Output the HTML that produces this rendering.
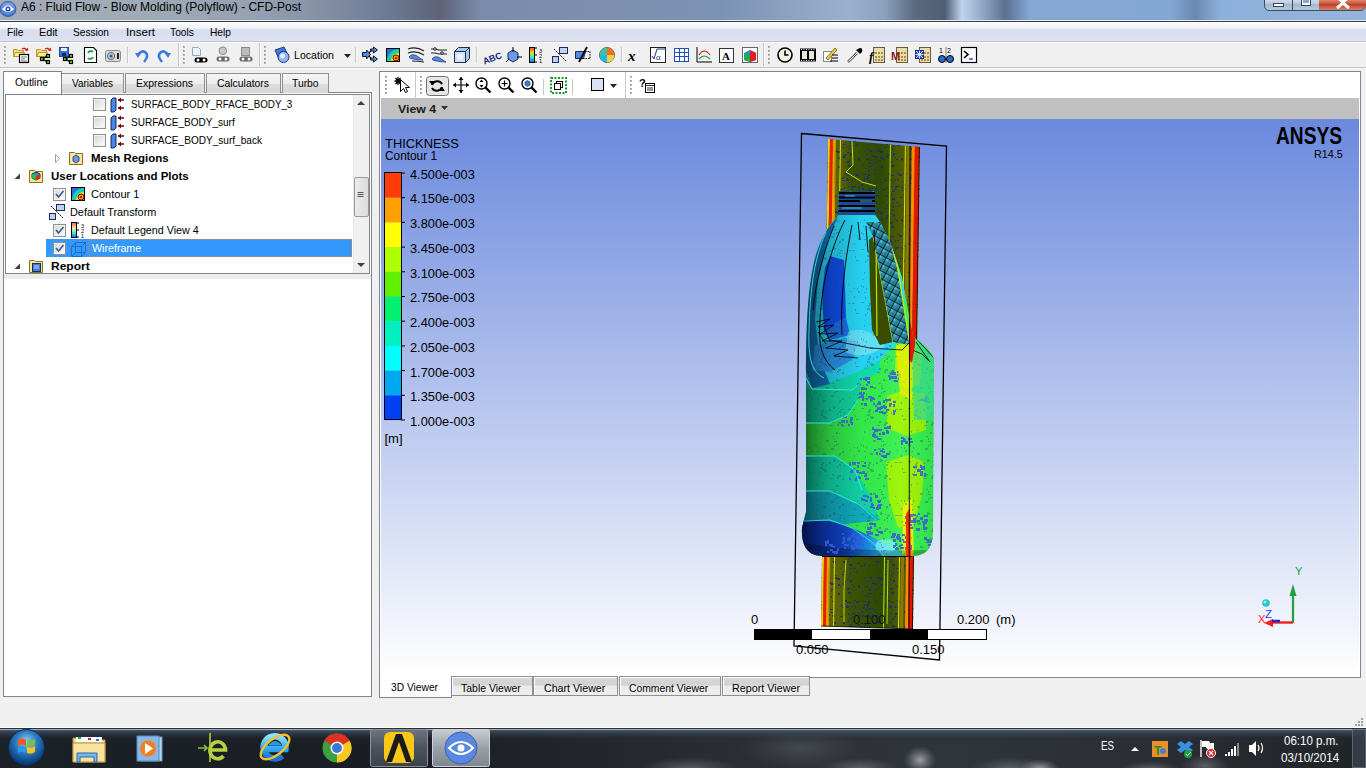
<!DOCTYPE html><html><head><meta charset='utf-8'><style>

*{margin:0;padding:0;box-sizing:border-box}
html,body{width:1366px;height:768px;overflow:hidden;background:#f0f0f0;font-family:"Liberation Sans",sans-serif;font-size:12px;color:#000}
.a{position:absolute}
.t{position:absolute;white-space:nowrap;transform-origin:0 0;font-family:"Liberation Sans",sans-serif}
svg{position:absolute;overflow:visible}
.tab{position:absolute;height:20px;border:1px solid #8e8f8f;border-bottom:none;background:linear-gradient(#f6f6f6 0%,#ededed 50%,#dedede 51%,#d6d6d6 100%)}
.btab{position:absolute;top:676px;height:20px;border:1px solid #8e8f8f;box-shadow:inset 1px 1px 0 #fff;background:linear-gradient(#d8d8d8 0%,#d2d2d2 45%,#ebebeb 50%,#eeeeee 100%)}

</style></head><body>
<div class='a' style='left:0;top:0;width:1366px;height:20px;background:linear-gradient(90deg,#a3acb8 0.00%,#a0a9b6 10.98%,#96a1b2 18.30%,#8a96aa 21.96%,#7f8aa0 24.89%,#6e7e98 27.82%,#5e6278 32.21%,#7a8caa 35.14%,#7d90ad 43.92%,#7a92b4 52.71%,#9ab0cc 62.23%,#8aa0bc 64.79%,#5a6a80 66.98%,#4e5e74 69.18%,#c0d4f0 70.42%,#8aa2c0 72.11%,#5a7090 73.57%,#86a8d4 75.40%,#84a8d6 85.65%,#6a88b0 87.48%,#8cb0dc 89.31%,#94b4dc 100.00%)'></div>
<div class='a' style='left:0;top:20px;width:1366px;height:1px;background:rgba(220,230,240,0.45)'></div>
<div class='a' style='left:0;top:21px;width:1366px;height:1px;background:#363e48'></div>
<div class='a' style='left:1264px;top:-3px;width:102px;height:14px;border:1px solid #3f4a5a;border-radius:0 0 5px 5px;background:linear-gradient(#dfe7f1,#b5c6dc 50%,#a2b7d3 51%,#b4c8e2)'></div>
<div class='a' style='left:1292px;top:0;width:1px;height:10px;background:#3f4a5a'></div>
<div class='a' style='left:1319px;top:0;width:1px;height:10px;background:#3f4a5a'></div>
<div class='a' style='left:1319px;top:-2px;width:47px;height:12px;border-radius:0 0 5px 0;background:linear-gradient(#e8a191,#c9513a 50%,#b83c23 51%,#d8826a)'></div>
<div class='a' style='left:1273px;top:3px;width:11px;height:4px;background:#fff;border:1px solid #39465a'></div>
<div class='a' style='left:1301px;top:-1px;width:10px;height:7px;background:#fff;border:1px solid #39465a'></div>
<div class='a' style='left:1303px;top:0px;width:6px;height:3px;background:#8fa7c6'></div>
<svg style='left:1335px;top:-3px' width='16' height='12'><path d='M2,0 L8,5 L14,0 M2,11 L8,6 L14,11' stroke='#fff' stroke-width='3' fill='none'/></svg>
<svg style='left:0;top:1px' width='17' height='17'><defs><radialGradient id='eyeg' cx='0.5' cy='0.4' r='0.6'><stop offset='0' stop-color='#b8d0f8'/><stop offset='1' stop-color='#3a68c8'/></radialGradient></defs><ellipse cx='8' cy='8' rx='8' ry='7.5' fill='url(#eyeg)' stroke='#2a50a0' stroke-width='0.8'/><path d='M2,8 q6,-6 12,0 q-6,6 -12,0z' fill='#fff'/><circle cx='8' cy='8' r='2.6' fill='#2a58b8'/><circle cx='8' cy='8' r='1.1' fill='#fff'/></svg>
<div class='a' style='left:0;top:22px;width:1366px;height:19px;background:linear-gradient(#fdfdfe 0%,#f3f5fa 30%,#e6eaf5 36%,#d8deef 42%,#dae0f0 85%,#dfe4f3 100%)'></div>
<div class='a' style='left:0;top:41px;width:1366px;height:1px;background:#bcc3d0'></div>
<div class='a' style='left:0;top:42px;width:1366px;height:1px;background:#fdfdfd'></div>
<div class='a' style='left:0;top:43px;width:1366px;height:24px;background:#f0f0f0'></div>
<div class='a' style='left:0;top:67px;width:1366px;height:1px;background:#c4c4c4'></div>
<div class='a' style='left:0;top:68px;width:1366px;height:1px;background:#fafafa'></div>
<div class='a' style='left:3px;top:92px;width:369px;height:605px;border:1px solid #80848c;background:#fff'></div>
<div class='tab' style='left:61px;top:73px;width:63px;height:20px'></div>
<div class='tab' style='left:125px;top:73px;width:80px;height:20px'></div>
<div class='tab' style='left:206px;top:73px;width:75px;height:20px'></div>
<div class='tab' style='left:282px;top:73px;width:47px;height:20px'></div>
<div class='a' style='left:3px;top:71px;width:59px;height:23px;border:1px solid #80848c;border-bottom:none;background:#fff'></div>
<div class='a' style='left:5px;top:94px;width:365px;height:180px;border:1px solid #80848c;background:#fff'></div>
<div class='a' style='left:4px;top:274px;width:367px;height:5px;background:#ececec'></div>
<div class='a' style='left:353px;top:95px;width:16px;height:178px;background:#f0f0f0;border-left:1px solid #e8e8e8'></div>
<div class='a' style='left:354px;top:177px;width:15px;height:40px;border:1px solid #9a9a9a;border-radius:2px;background:linear-gradient(90deg,#eaeaea,#dcdcdc)'></div>
<svg style='left:356px;top:190px' width='10' height='10'><path d='M1.5,2.5h6M1.5,4.5h6M1.5,6.5h6' stroke='#555' stroke-width='1'/></svg>
<svg style='left:356px;top:99px' width='10' height='8'><path d='M1,6 L5,2 L9,6Z' fill='#404040'/></svg>
<svg style='left:356px;top:261px' width='10' height='8'><path d='M1,2 L5,6 L9,2Z' fill='#404040'/></svg>
<div class='a' style='left:46px;top:239px;width:306px;height:18px;background:#3399ff'></div>
<div class='a' style='left:89px;top:239px;width:263px;height:18px;border:1px dotted #e08040'></div>
<div class='a' style='left:379px;top:71px;width:982px;height:606px;border:1px solid #80848c;border-bottom:none;background:#fff'></div>
<div class='a' style='left:381px;top:98px;width:978px;height:21px;background:#c0c0c0'></div>
<div class='a' style='left:381px;top:119px;width:978px;height:558px;background:linear-gradient(#6b89dd 0%,#ffffff 100%)'></div>
<div class='a' style='left:1359px;top:72px;width:1px;height:605px;background:#fff'></div>
<div class='btab' style='left:451px;width:82px'></div>
<div class='btab' style='left:533px;width:85px'></div>
<div class='btab' style='left:619px;width:102px'></div>
<div class='btab' style='left:722px;width:88px'></div>
<div class='a' style='left:809px;top:677px;width:552px;height:1px;background:#80848c'></div>
<div class='a' style='left:1360px;top:672px;width:1px;height:6px;background:#80848c'></div>
<svg style='left:1350px;top:717px' width='14' height='10'><g fill='#9aa0a8'><rect x='11' y='1' width='2' height='2'/><rect x='8' y='4' width='2' height='2'/><rect x='11' y='4' width='2' height='2'/><rect x='5' y='7' width='2' height='2'/><rect x='8' y='7' width='2' height='2'/><rect x='11' y='7' width='2' height='2'/></g></svg>
<div class='a' style='left:379px;top:676px;width:73px;height:22px;border:1px solid #80848c;border-top:none;background:#fff'></div>
<div class='a' style='left:0;top:727px;width:1366px;height:1px;background:#fdfdfd'></div>
<div class='a' style='left:0;top:728px;width:1366px;height:40px;background:linear-gradient(90deg,#1c2027 0%,#1a1e24 30%,#24282e 45%,#2e3238 60%,#30353b 70%,#2a2e34 85%,#202428 100%)'></div>
<svg style='left:0;top:728px' width='1366' height='40'><defs><radialGradient id='tb1'><stop offset='0' stop-color='#a8acb0' stop-opacity='0.9'/><stop offset='1' stop-color='#808488' stop-opacity='0'/></radialGradient><radialGradient id='tb2'><stop offset='0' stop-color='#70767c' stop-opacity='0.7'/><stop offset='1' stop-color='#60666c' stop-opacity='0'/></radialGradient></defs><ellipse cx='920' cy='32' rx='16' ry='14' fill='url(#tb1)'/><ellipse cx='690' cy='41' rx='50' ry='12' fill='url(#tb2)'/><ellipse cx='860' cy='40' rx='40' ry='10' fill='url(#tb2)'/><ellipse cx='1010' cy='41' rx='40' ry='12' fill='url(#tb2)'/><ellipse cx='1040' cy='41' rx='20' ry='10' fill='url(#tb1)'/><ellipse cx='1150' cy='41' rx='30' ry='8' fill='url(#tb2)'/><ellipse cx='1205' cy='38' rx='24' ry='12' fill='url(#tb2)'/><ellipse cx='800' cy='20' rx='60' ry='20' fill='url(#tb2)' opacity='0.5'/></svg>
<div class='a' style='left:0;top:728px;width:1366px;height:40px;background:linear-gradient(#28303a 0px,#28303a 1px,#a0aeb8 1px,#a0aeb8 2px,rgba(74,90,112,0.9) 2px,rgba(60,74,92,0.6) 5px,rgba(40,48,60,0.2) 10px,rgba(0,0,0,0) 16px)'></div>
<svg style='left:0;top:0' width='1366' height='768' viewBox='0 0 1366 768'><defs><clipPath id='colclip'><path d='M828,139 L920,147 L913,629 L821,626z'/></clipPath><clipPath id='bodyclip'><path d='M839,191 L875,191 L875,215 C884,226 894,250 902,278 L909,315 L913,336 C922,344 932,350 934,360 L933,532 C933,548 926,556 912,556 L822,556 C808,556 801,546 802,528 L806,512 L806,380 C806,320 808,290 814,262 C818,245 826,228 838,216 Z'/></clipPath><linearGradient id='colg' x1='821' x2='920' gradientUnits='userSpaceOnUse'><stop offset='0' stop-color='#6a6a00'/><stop offset='0.2' stop-color='#5a6000'/><stop offset='0.3' stop-color='#3c5200'/><stop offset='0.6' stop-color='#2e4a00'/><stop offset='0.8' stop-color='#4c5a00'/><stop offset='1' stop-color='#6e6a00'/></linearGradient><linearGradient id='shade' x1='802' x2='934' gradientUnits='userSpaceOnUse'><stop offset='0' stop-color='#000' stop-opacity='0.6'/><stop offset='0.08' stop-color='#000' stop-opacity='0.42'/><stop offset='0.22' stop-color='#000' stop-opacity='0.2'/><stop offset='0.45' stop-color='#000' stop-opacity='0.04'/><stop offset='0.75' stop-color='#fff' stop-opacity='0.06'/><stop offset='1' stop-color='#000' stop-opacity='0.08'/></linearGradient><pattern id='speck' width='47' height='53' patternUnits='userSpaceOnUse'><path d='M15,37h3v1h-3zM23,38h2v1h-2zM38,0h2v2h-2zM35,14h1v2h-1zM34,35h2v2h-2zM40,9h1v1h-1zM33,24h1v1h-1zM10,48h3v1h-3zM19,49h1v2h-1zM30,38h2v2h-2zM25,46h3v2h-3zM8,23h1v1h-1zM8,31h1v2h-1zM43,27h2v2h-2zM32,24h3v2h-3zM34,37h2v1h-2zM21,43h1v2h-1zM38,42h1v2h-1zM34,36h3v1h-3zM45,41h1v2h-1zM18,7h1v2h-1zM40,30h1v2h-1zM4,26h1v1h-1zM18,27h2v1h-2zM2,38h3v1h-3zM24,45h3v2h-3zM35,17h3v1h-3zM2,19h1v1h-1zM6,38h3v1h-3zM12,26h2v2h-2zM9,44h1v2h-1zM20,23h1v2h-1zM24,29h3v2h-3zM41,38h3v1h-3zM39,51h3v2h-3zM27,40h1v2h-1zM27,16h3v2h-3zM35,21h1v2h-1zM37,20h1v2h-1zM39,37h1v1h-1zM40,40h2v2h-2zM22,43h2v2h-2zM31,1h3v1h-3zM43,1h2v2h-2zM40,29h2v2h-2zM11,23h1v2h-1zM23,38h2v2h-2zM24,6h1v1h-1zM19,32h1v2h-1zM15,20h1v2h-1zM41,44h1v1h-1zM38,20h2v1h-2zM28,51h1v1h-1zM21,47h1v2h-1zM17,14h1v1h-1zM33,12h2v1h-2zM17,21h1v2h-1zM37,8h2v2h-2zM33,50h2v2h-2zM22,40h2v2h-2z' fill='#24348a'/></pattern><pattern id='speck2' width='43' height='61' patternUnits='userSpaceOnUse'><path d='M20,60h1v2h-1zM41,3h1v1h-1zM23,37h1v1h-1zM2,5h2v2h-2zM4,15h1v2h-1zM3,52h3v1h-3zM14,40h3v1h-3zM36,37h2v1h-2zM14,2h3v1h-3zM18,26h1v1h-1zM36,19h3v1h-3zM6,37h3v1h-3zM23,6h3v1h-3zM36,3h3v1h-3zM31,43h3v2h-3zM20,29h3v2h-3zM23,19h1v1h-1zM15,5h3v2h-3zM33,31h2v2h-2zM18,38h1v1h-1zM32,26h1v2h-1zM9,59h2v2h-2zM2,42h1v2h-1zM21,44h2v2h-2zM37,51h2v1h-2zM5,60h2v2h-2zM42,4h1v2h-1zM41,36h2v2h-2zM24,56h2v1h-2zM29,22h1v1h-1zM31,3h1v2h-1zM8,47h1v2h-1zM25,58h2v1h-2zM10,28h2v2h-2zM8,52h2v2h-2zM26,22h2v1h-2zM9,5h1v1h-1zM14,42h1v1h-1zM31,53h3v1h-3zM16,18h1v1h-1zM26,34h2v2h-2zM8,44h3v1h-3zM29,57h3v2h-3zM25,25h2v1h-2zM30,40h2v1h-2zM12,4h1v2h-1zM10,7h2v1h-2zM6,0h3v1h-3zM34,6h2v1h-2zM4,55h1v2h-1zM9,40h2v2h-2zM38,23h2v1h-2zM7,54h2v2h-2zM30,30h2v1h-2zM9,6h2v2h-2zM30,53h1v1h-1zM13,60h3v2h-3zM9,44h3v1h-3zM33,19h1v2h-1zM33,23h1v2h-1zM14,34h3v2h-3zM40,14h3v1h-3zM15,52h2v1h-2zM12,33h2v2h-2zM1,1h2v2h-2zM16,12h3v2h-3zM28,51h2v2h-2zM5,14h1v1h-1zM30,12h2v1h-2zM30,39h3v1h-3zM30,58h2v1h-2zM42,7h2v1h-2zM30,56h1v2h-1zM40,21h1v2h-1zM29,25h1v1h-1zM10,8h1v1h-1zM37,57h2v1h-2zM39,52h3v2h-3zM42,59h2v1h-2zM35,35h1v1h-1zM0,51h1v1h-1zM27,55h1v1h-1zM1,16h1v2h-1zM32,15h3v2h-3zM16,34h2v1h-2zM3,58h2v2h-2zM42,37h3v2h-3zM32,8h3v1h-3zM33,32h1v2h-1zM11,38h1v1h-1zM11,9h2v1h-2zM35,3h2v2h-2zM6,56h3v1h-3zM15,12h2v1h-2zM6,32h2v1h-2zM4,28h2v1h-2zM17,28h3v2h-3zM32,60h1v2h-1zM35,57h1v2h-1zM8,26h1v2h-1zM28,20h1v1h-1zM27,4h1v2h-1zM7,57h1v2h-1zM9,16h1v2h-1zM14,47h1v2h-1zM31,10h1v1h-1zM27,32h2v2h-2zM26,12h2v2h-2zM5,46h2v1h-2zM21,35h2v2h-2z' fill='#1c2c70'/></pattern><pattern id='checker' width='7' height='7' patternUnits='userSpaceOnUse' patternTransform='rotate(28)'><rect width='7' height='7' fill='#3a80c8'/><rect width='3.5' height='3.5' fill='#40c8b8'/><rect x='3.5' y='3.5' width='3.5' height='3.5' fill='#20886a'/><path d='M0,0.5h7M0.5,0v7' stroke='#000' stroke-width='0.7'/></pattern></defs><path d='M801.5,133.5 L946.5,146 L939.5,660 L794,646 Z' fill='none' stroke='#000' stroke-width='1.3'/><g clip-path='url(#colclip)'><rect x='815' y='135' width='110' height='500' fill='url(#colg)'/><rect x='815' y='135' width='110' height='500' fill='url(#speck2)' opacity='0.9'/><g transform='translate(0,139) skewX(-0.82) translate(0,-139)'><rect x='828' y='130' width='2' height='510' fill='#f0d000'/><rect x='830' y='130' width='3' height='510' fill='#e82000'/><rect x='833' y='130' width='2' height='510' fill='#ff9a00'/><rect x='835' y='130' width='1' height='510' fill='#c0a000'/><rect x='840' y='130' width='1' height='510' fill='#d8e800'/><rect x='890' y='130' width='1' height='510' fill='#b8e800'/><rect x='905' y='130' width='1' height='510' fill='#e0e800'/><rect x='907' y='130' width='3' height='510' fill='#8a7a00'/><rect x='912' y='130' width='3' height='510' fill='#ff8a00'/><rect x='915' y='130' width='4' height='510' fill='#e01800'/><rect x='919' y='130' width='1' height='510' fill='#400000'/></g><path d='M852,141 L853,165 L846,172 L862,182 L876,186' stroke='#c8e000' stroke-width='1' fill='none'/></g><g clip-path='url(#bodyclip)'><rect x='795' y='185' width='150' height='380' fill='#34f04c'/><path d='M795,375 L812,389 L852,390 L862,380 L880,372 L880,360 L795,360z' fill='#10e0b0'/><path d='M795,389 L812,389 L852,390 L862,380 L858,400 L848,415 L830,423 L795,423z' fill='#10d8a0'/><path d='M795,456 L835,456 L855,470 L870,495 L880,520 L795,530z' fill='#10d8a8'/><path d='M795,491 L830,491 L860,505 L880,520 L795,530z' fill='#10b0c0'/><path d='M790,185 H900 L905,300 L895,345 L880,360 C860,372 835,382 812,388 L790,385z' fill='#28d8f8'/><path d='M838,216 C826,228 818,245 814,262 C808,290 806,320 806,370 L812,388 L830,384 L820,360 L815,320 L818,280 L828,240z' fill='#1478c0'/><path d='M830,256 L844,260 L846,318 L836,323 L824,332 L822,292 L825,268z' fill='#1050f0'/><path d='M846,318 L836,323 L824,332 L830,340 L850,335z' fill='#1a70e8'/><path d='M815,345 L845,338 L858,342 L852,360 L830,372 L812,370z' fill='#2a9af0'/><path d='M848,332 C860,326 875,332 885,346 C872,356 858,358 845,352z' fill='#90f0ff' opacity='0.55'/><path d='M887,396 L905,390 L925,394 L926,430 L906,436 L887,428z' fill='#98f400'/><path d='M896,345 L912,340 L922,352 L920,385 L905,390 L895,372z' fill='#a8f400'/><path d='M886,462 L908,455 L924,462 L922,495 L914,524 L898,528 L889,500z' fill='#98f400'/><path d='M903,505 L912,498 L914,556 L902,556z' fill='#e8f000'/><linearGradient id='bband' x1='802' x2='910' gradientUnits='userSpaceOnUse'><stop offset='0' stop-color='#0a30b0'/><stop offset='0.4' stop-color='#1048d0'/><stop offset='0.62' stop-color='#1a90e8'/><stop offset='0.8' stop-color='#40d8f0'/><stop offset='1' stop-color='#30e8c0'/></linearGradient><path d='M790,522 C810,518 835,520 852,528 C872,536 890,545 906,556 H790z' fill='url(#bband)'/><ellipse cx='886' cy='546' rx='11' ry='7' fill='#80f8f8' opacity='0.7'/><rect x='795' y='185' width='150' height='380' fill='url(#shade)'/><path d='M790,540 C820,548 870,552 935,550 V560 H790z' fill='#000' opacity='0.25'/><rect x='795' y='185' width='150' height='380' fill='url(#speck)' opacity='0.3'/><path d='M883,406h4v2h-4zM884,406h2v3h-2zM884,407h2v2h-2zM883,400h2v3h-2zM893,412h2v3h-2zM875,405h2v2h-2zM878,401h2v2h-2zM881,406h2v3h-2zM879,402h2v3h-2zM877,407h4v3h-4zM893,410h3v2h-3zM889,405h2v2h-2zM885,399h2v2h-2zM882,412h2v2h-2zM879,411h4v2h-4zM893,404h2v3h-2zM886,409h3v2h-3zM877,403h4v2h-4zM877,408h2v2h-2zM883,405h2v2h-2zM884,412h2v2h-2zM887,399h4v2h-4zM875,410h3v2h-3zM879,403h2v2h-2zM893,401h3v2h-3zM889,403h3v2h-3zM859,393h2v2h-2zM868,396h4v2h-4zM873,398h2v2h-2zM861,394h2v3h-2zM862,394h2v3h-2zM873,403h2v2h-2zM859,393h3v2h-3zM870,397h4v3h-4zM866,398h2v2h-2zM862,399h2v2h-2zM861,403h2v2h-2zM862,397h2v2h-2zM861,396h2v2h-2zM864,403h3v3h-3zM870,398h2v3h-2zM859,392h3v3h-3zM863,392h2v2h-2zM859,396h2v2h-2zM873,433h2v3h-2zM884,427h3v2h-3zM873,432h2v2h-2zM887,426h4v3h-4zM872,434h4v3h-4zM872,427h2v3h-2zM874,429h4v3h-4zM877,438h4v2h-4zM879,433h2v2h-2zM882,432h2v3h-2zM874,436h4v2h-4zM886,430h2v3h-2zM882,432h3v3h-3zM887,432h2v2h-2zM878,429h4v2h-4zM886,431h3v2h-3zM851,470h2v3h-2zM849,478h2v2h-2zM857,466h2v2h-2zM856,470h3v3h-3zM865,478h4v2h-4zM849,463h2v3h-2zM862,471h3v3h-3zM864,462h2v2h-2zM857,462h3v2h-3zM864,475h2v2h-2zM850,471h3v2h-3zM862,465h4v2h-4zM852,462h4v3h-4zM862,465h3v2h-3zM859,477h2v2h-2zM865,473h2v2h-2zM856,476h4v2h-4zM857,465h2v2h-2zM859,472h3v2h-3zM855,478h2v3h-2zM865,475h2v2h-2zM853,468h2v2h-2zM871,504h3v2h-3zM877,505h3v3h-3zM862,499h4v2h-4zM870,493h2v2h-2zM875,495h3v3h-3zM875,495h2v3h-2zM877,500h4v2h-4zM871,503h2v2h-2zM870,497h2v3h-2zM870,506h3v2h-3zM873,507h2v2h-2zM876,507h3v3h-3zM870,499h2v3h-2zM861,498h2v3h-2zM878,501h2v2h-2zM863,495h4v2h-4zM878,504h4v2h-4zM865,500h3v2h-3zM877,506h4v3h-4zM867,496h2v2h-2zM901,443h2v2h-2zM901,437h3v2h-3zM908,438h4v2h-4zM905,441h3v3h-3zM901,440h4v2h-4zM904,439h2v3h-2zM901,441h2v3h-2zM902,440h2v2h-2zM910,441h3v2h-3zM903,438h2v2h-2zM921,467h2v2h-2zM923,466h2v2h-2zM917,469h4v3h-4zM921,466h4v3h-4zM920,465h2v3h-2zM920,474h3v2h-3zM920,471h3v3h-3zM924,473h2v2h-2zM913,466h4v2h-4zM914,466h2v2h-2zM924,474h2v3h-2zM913,474h4v2h-4zM921,468h4v2h-4zM918,469h3v2h-3zM918,513h2v2h-2zM913,518h3v2h-3zM923,522h2v3h-2zM921,517h2v3h-2zM923,527h4v3h-4zM917,520h3v2h-3zM911,514h2v2h-2zM908,517h3v2h-3zM920,518h2v2h-2zM921,517h2v2h-2zM923,528h2v2h-2zM910,527h3v2h-3zM909,518h2v3h-2zM907,520h4v3h-4zM909,514h4v3h-4zM905,522h2v2h-2zM914,520h2v3h-2zM913,514h3v2h-3zM923,521h4v3h-4zM916,528h4v3h-4zM907,522h2v2h-2zM924,515h4v2h-4zM922,521h2v2h-2zM924,519h4v3h-4zM911,520h4v3h-4zM910,527h3v2h-3zM905,516h2v3h-2zM908,524h4v2h-4zM923,524h2v3h-2zM925,527h2v2h-2zM899,540h2v2h-2zM900,547h4v2h-4zM910,545h2v2h-2zM902,539h2v2h-2zM897,534h3v2h-3zM893,539h3v3h-3zM902,539h2v2h-2zM905,536h2v3h-2zM908,545h3v2h-3zM895,543h2v3h-2zM896,536h2v3h-2zM910,547h2v3h-2zM891,536h4v2h-4zM902,534h3v2h-3zM905,547h2v3h-2zM895,548h4v2h-4zM897,537h4v3h-4zM893,546h2v2h-2zM906,542h2v2h-2zM898,536h2v2h-2zM893,545h3v2h-3zM901,544h2v2h-2zM903,541h4v2h-4zM892,533h4v3h-4zM899,545h2v2h-2zM896,547h2v3h-2zM846,544h3v2h-3zM858,536h3v2h-3zM858,537h4v3h-4zM852,546h3v2h-3zM851,548h4v2h-4zM844,547h2v2h-2zM847,538h3v3h-3zM848,538h2v3h-2zM851,545h2v3h-2zM851,535h4v2h-4zM856,536h2v3h-2zM843,537h2v3h-2zM857,539h3v3h-3zM842,533h2v2h-2zM842,542h2v2h-2zM855,542h2v3h-2zM844,544h3v2h-3zM848,537h3v3h-3zM843,540h2v3h-2zM852,533h3v2h-3zM856,545h4v3h-4zM853,540h2v2h-2zM829,544h2v2h-2zM834,551h4v3h-4zM825,541h4v3h-4zM827,551h2v2h-2zM827,540h2v2h-2zM837,548h2v3h-2zM830,549h3v2h-3zM825,543h2v3h-2zM833,546h2v2h-2zM825,542h2v2h-2zM832,551h4v2h-4zM830,544h3v3h-3zM863,388h4v2h-4zM860,378h2v2h-2zM870,386h3v2h-3zM865,379h2v2h-2zM868,381h2v3h-2zM861,387h4v2h-4zM866,377h2v3h-2zM866,384h2v2h-2zM863,378h2v2h-2zM867,377h3v3h-3zM865,377h4v3h-4zM861,388h3v2h-3zM867,381h2v2h-2zM857,383h4v2h-4zM902,381h3v2h-3zM893,376h4v3h-4zM898,373h2v2h-2zM898,377h2v3h-2zM894,380h4v2h-4zM892,370h2v3h-2zM890,376h3v3h-3zM893,376h3v2h-3zM899,376h2v2h-2zM890,373h2v2h-2zM892,372h4v3h-4zM897,374h4v2h-4zM889,377h2v3h-2zM897,371h2v2h-2zM888,375h2v2h-2zM891,371h2v2h-2zM924,397h4v3h-4zM921,398h2v3h-2zM924,399h4v3h-4zM920,399h3v2h-3zM927,401h2v2h-2zM923,399h4v2h-4zM926,398h3v2h-3zM928,401h2v2h-2zM848,424h2v2h-2zM846,420h2v3h-2zM851,422h2v3h-2zM850,421h2v2h-2zM841,420h4v3h-4zM843,416h3v2h-3zM845,416h2v2h-2zM850,420h2v3h-2zM850,417h3v3h-3zM841,424h2v2h-2zM882,451h3v2h-3zM876,452h2v2h-2zM874,449h2v2h-2zM883,455h4v3h-4zM881,455h2v2h-2zM876,452h2v3h-2zM879,453h2v2h-2zM880,450h3v2h-3zM882,448h2v2h-2zM886,453h4v2h-4zM927,541h4v2h-4zM928,544h4v2h-4zM924,537h3v3h-3zM928,539h2v2h-2zM932,538h4v3h-4zM927,539h3v3h-3zM932,538h4v2h-4zM928,539h2v2h-2zM930,540h2v3h-2zM926,539h2v2h-2zM880,531h3v3h-3zM871,532h2v3h-2zM876,529h2v2h-2zM872,523h4v2h-4zM869,531h2v2h-2zM867,527h4v3h-4zM870,526h2v2h-2zM869,527h3v2h-3zM869,523h4v2h-4zM867,533h2v2h-2zM869,533h4v2h-4zM867,533h2v3h-2zM874,524h2v3h-2zM866,531h3v2h-3zM878,531h2v2h-2zM875,534h4v2h-4z' fill='#3a5ad8' opacity='0.85'/><path d='M869,240 L873,236 L893,342 L880,345 L872,330 L870,290z' fill='#3a4c00'/><path d='M876,242 L877,336' stroke='#b8e800' stroke-width='1.2' fill='none'/><path d='M873,236 L893,342' stroke='#d0f000' stroke-width='1' fill='none'/><path d='M866,222 L886,222 L898,270 L910,345 L893,342 L873,236z' fill='url(#checker)'/><path d='M886,222 L898,270 L910,345' stroke='#c0f000' stroke-width='1.4' fill='none'/><path d='M912,338 C920,342 928,348 934,360 L934,420 L914,420z' fill='#38d890' opacity='0.7'/><path d='M896,346 L910,344 L912,400 L900,395z' fill='#e0f000' opacity='0.85'/><path d='M914,336 L934,358 M916,342 L930,362 M912,350 l10,4 l8,8' stroke='#000' stroke-width='0.8' fill='none'/><path d='M909,146 L915,146 L915,345 L912,363 L909,360z' fill='#e81800'/><path d='M906,514 L910,508 L911,556 L906,556z' fill='#ff3000'/><rect x='838' y='191' width='38' height='24' fill='#1a4a90'/><path d='M838,193 h38 M838,197.5 h38 M838,201 h38 M838,206 h38 M838,211 h38' stroke='#000' stroke-width='1.8'/><path d='M845,196 h10 M860,201 h12 M842,208 h20' stroke='#30c0e0' stroke-width='1.2'/><path d='M850,191 l10,-3 l14,3' stroke='#a0f000' stroke-width='1' fill='none'/></g><g fill='none' stroke='#40f0f0' stroke-width='0.9' opacity='0.9'><path d='M806,378 L812,389 L852,390 L862,382'/><path d='M806,423 L830,423 L848,415 L858,400'/><path d='M806,456 L835,456 L855,470 L862,490'/><path d='M806,491 L830,491 L860,505 L876,520'/><path d='M804,521 L830,520 L852,528 L872,542 L884,556'/><path d='M826,232 C814,258 810,290 809,330 C808,360 812,372 824,378'/></g><g fill='none' stroke='#000' stroke-width='0.9'><path d='M845,220 C832,245 822,280 820,320 C818,345 822,360 835,370'/><path d='M852,225 C845,260 840,300 842,335'/><path d='M834,226 C824,250 816,280 813,310'/><path d='M816,322 l14,-3 l-12,8 l16,-2 l-14,9 l18,-1 l-16,8 l20,0 l-16,7 l22,2 l-14,6 l24,2 M818,332 l8,12 M824,326 l6,16 M830,340 l40,8 l32,2 l8,-8' stroke-width='0.8'/><path d='M858,222 L860,240 M866,226 L868,252 M874,230 L875,250'/><path d='M910,146 L909,628'/></g><path d='M821,626 L913,629' stroke='#000' stroke-width='0.8'/><path d='M822,556.5 H912' stroke='#000' stroke-width='1'/><path d='M846,560 q-3,30 -2,62 M888,560 l-1,64' stroke='#c8e800' stroke-width='0.9' fill='none'/><rect x='754.5' y='629.5' width='232' height='10' fill='#fff' stroke='#000'/><rect x='754' y='629' width='58' height='11' fill='#000'/><rect x='870' y='629' width='58' height='11' fill='#000'/><rect x='385' y='173.00' width='16' height='24.8' fill='#ff3c0a'/><rect x='385' y='197.70' width='16' height='24.8' fill='#ffa000'/><rect x='385' y='222.40' width='16' height='24.8' fill='#ffff00'/><rect x='385' y='247.10' width='16' height='24.8' fill='#b0ff00'/><rect x='385' y='271.80' width='16' height='24.8' fill='#60f000'/><rect x='385' y='296.50' width='16' height='24.8' fill='#00f070'/><rect x='385' y='321.20' width='16' height='24.8' fill='#00f0c0'/><rect x='385' y='345.90' width='16' height='24.8' fill='#00ffff'/><rect x='385' y='370.60' width='16' height='24.8' fill='#00a8f0'/><rect x='385' y='395.30' width='16' height='24.8' fill='#0040f0'/><rect x='384.5' y='172.5' width='17' height='247' fill='none' stroke='#000'/><path d='M401,173.00 h4' stroke='#000' stroke-width='1'/><path d='M401,197.70 h4' stroke='#000' stroke-width='1'/><path d='M401,222.40 h4' stroke='#000' stroke-width='1'/><path d='M401,247.10 h4' stroke='#000' stroke-width='1'/><path d='M401,271.80 h4' stroke='#000' stroke-width='1'/><path d='M401,296.50 h4' stroke='#000' stroke-width='1'/><path d='M401,321.20 h4' stroke='#000' stroke-width='1'/><path d='M401,345.90 h4' stroke='#000' stroke-width='1'/><path d='M401,370.60 h4' stroke='#000' stroke-width='1'/><path d='M401,395.30 h4' stroke='#000' stroke-width='1'/><path d='M401,420.00 h4' stroke='#000' stroke-width='1'/></svg>
<svg style='left:0;top:0' width='1366' height='768' viewBox='0 0 1366 768'><rect x='4' y='46' width='2' height='2' fill='#b4b4b4'/><rect x='4' y='46' width='1' height='1' fill='#8c8c8c'/><rect x='4' y='50' width='2' height='2' fill='#b4b4b4'/><rect x='4' y='50' width='1' height='1' fill='#8c8c8c'/><rect x='4' y='54' width='2' height='2' fill='#b4b4b4'/><rect x='4' y='54' width='1' height='1' fill='#8c8c8c'/><rect x='4' y='58' width='2' height='2' fill='#b4b4b4'/><rect x='4' y='58' width='1' height='1' fill='#8c8c8c'/><rect x='4' y='62' width='2' height='2' fill='#b4b4b4'/><rect x='4' y='62' width='1' height='1' fill='#8c8c8c'/><g transform='translate(13,47)'><path d='M0.5,2.5 h4 l1,1 h5 v6 h-10z' fill='#f6dc7a' stroke='#b8942c'/><path d='M0.5,9.5 l2,-4 h9 l-2,4z' fill='#fbe9a0' stroke='#b8942c'/><path d='M9,2 q3,-2 5,2' stroke='#d02020' stroke-width='1.4' fill='none'/><path d='M12.5,3.5 l3,0 l-1,-3z' fill='#d02020'/><rect x='6.5' y='7.5' width='9' height='8' fill='#fff' stroke='#000' stroke-width='1.2'/><path d='M8,10h6M8,12h4M8,14h6' stroke='#777'/></g><g transform='translate(36,47)'><path d='M0.5,2.5 h4 l1,1 h5 v6 h-10z' fill='#f6dc7a' stroke='#b8942c'/><path d='M0.5,9.5 l2,-4 h9 l-2,4z' fill='#fbe9a0' stroke='#b8942c'/><path d='M9,2 q3,-2 5,2' stroke='#d02020' stroke-width='1.4' fill='none'/><path d='M12.5,3.5 l3,0 l-1,-3z' fill='#d02020'/><g fill='#7de80a' stroke='#000' stroke-width='1.2'><rect x='10.5' y='7.5' width='3' height='3'/><rect x='4.5' y='10.5' width='3' height='3'/><rect x='10.5' y='13.5' width='3' height='3'/></g><path d='M7,12 L11,9 M7,12 L11,15' stroke='#000' stroke-width='1.3'/></g><g transform='translate(59,47)'><rect x='0.5' y='0.5' width='9' height='9' fill='#3d6fd0' stroke='#234a9a'/><rect x='2' y='1' width='6' height='3' fill='#e8eefa'/><rect x='3' y='6' width='4' height='3' fill='#12285a'/><g fill='#7de80a' stroke='#000' stroke-width='1.2'><rect x='10.5' y='7.5' width='3' height='3'/><rect x='4.5' y='10.5' width='3' height='3'/><rect x='10.5' y='13.5' width='3' height='3'/></g><path d='M7,12 L11,9 M7,12 L11,15' stroke='#000' stroke-width='1.3'/></g><g transform='translate(84,47)'><path d='M0.5,0.5 h9 l3,3 v12 h-12z' fill='#fff' stroke='#000' stroke-width='1.1'/><path d='M4,6 a3,3 0 0 1 5,-1 M9,10 a3,3 0 0 1 -5,1' stroke='#1a9a3a' stroke-width='1.8' fill='none'/></g><g transform='translate(105,49)'><rect x='0.5' y='1.5' width='15' height='11' rx='2' fill='#d9d9d9' stroke='#8a8a8a'/><circle cx='6' cy='7' r='3.6' fill='#bfc8d0' stroke='#6a6a6a'/><circle cx='6' cy='7' r='1.6' fill='#2a60b0'/><rect x='12' y='4' width='2' height='6' fill='#222'/></g><rect x='127' y='47' width='1' height='16' fill='#c8c8c8'/><rect x='128' y='47' width='1' height='16' fill='#f8f8f8'/><g transform='translate(135,49)'><path d='M3,6 q4,-6 8,-2 q3,3 -2,9' stroke='#3c78d8' stroke-width='2.6' fill='none'/><path d='M0,4 l6,0 l-3,5z' fill='#3c78d8'/></g><g transform='translate(159,49)'><path d='M9,6 q-4,-6 -8,-2 q-3,3 2,9' stroke='#3c78d8' stroke-width='2.6' fill='none'/><path d='M12,4 l-6,0 l3,5z' fill='#3c78d8'/></g><rect x='178' y='43' width='1' height='23' fill='#c4c4c4'/><rect x='179' y='43' width='1' height='23' fill='#ffffff'/><rect x='183' y='46' width='2' height='2' fill='#b4b4b4'/><rect x='183' y='46' width='1' height='1' fill='#8c8c8c'/><rect x='183' y='50' width='2' height='2' fill='#b4b4b4'/><rect x='183' y='50' width='1' height='1' fill='#8c8c8c'/><rect x='183' y='54' width='2' height='2' fill='#b4b4b4'/><rect x='183' y='54' width='1' height='1' fill='#8c8c8c'/><rect x='183' y='58' width='2' height='2' fill='#b4b4b4'/><rect x='183' y='58' width='1' height='1' fill='#8c8c8c'/><rect x='183' y='62' width='2' height='2' fill='#b4b4b4'/><rect x='183' y='62' width='1' height='1' fill='#8c8c8c'/><g transform='translate(192,47)'><path d='M0.5,0.5 h6 l2,2 v6 h-8z' fill='#eef2fa' stroke='#9aa'/><g transform='translate(2,10)'><g><rect x='0.5' y='0.5' width='13' height='5' rx='2.5' fill='#000'/><circle cx='4' cy='3' r='1.5' fill='#fff'/><circle cx='10' cy='3' r='1.5' fill='#fff'/></g></g></g><g transform='translate(216,47)'><circle cx='6.8' cy='3.8' r='3.8' fill='#c8c8c8' stroke='#8a8a8a'/><g transform='translate(0,9)'><g><rect x='0.5' y='0.5' width='13' height='5' rx='2.5' fill='#666'/><circle cx='4' cy='3' r='1.5' fill='#fff'/><circle cx='10' cy='3' r='1.5' fill='#fff'/></g></g></g><g transform='translate(239,47)'><rect x='2.5' y='0.5' width='8' height='8' fill='#bdbdbd' stroke='#8a8a8a'/><g transform='translate(0,9)'><g><rect x='0.5' y='0.5' width='13' height='5' rx='2.5' fill='#666'/><circle cx='4' cy='3' r='1.5' fill='#fff'/><circle cx='10' cy='3' r='1.5' fill='#fff'/></g></g></g><rect x='259' y='43' width='1' height='23' fill='#c4c4c4'/><rect x='260' y='43' width='1' height='23' fill='#ffffff'/><rect x='264' y='46' width='2' height='2' fill='#b4b4b4'/><rect x='264' y='46' width='1' height='1' fill='#8c8c8c'/><rect x='264' y='50' width='2' height='2' fill='#b4b4b4'/><rect x='264' y='50' width='1' height='1' fill='#8c8c8c'/><rect x='264' y='54' width='2' height='2' fill='#b4b4b4'/><rect x='264' y='54' width='1' height='1' fill='#8c8c8c'/><rect x='264' y='58' width='2' height='2' fill='#b4b4b4'/><rect x='264' y='58' width='1' height='1' fill='#8c8c8c'/><rect x='264' y='62' width='2' height='2' fill='#b4b4b4'/><rect x='264' y='62' width='1' height='1' fill='#8c8c8c'/><g transform='translate(274,47)'><path d='M1,3 l9,-3 l4,8 l-9,4z' fill='#4a78d0' stroke='#1a3a8a'/><circle cx='9.5' cy='10' r='5.5' fill='#8fb4f0' stroke='#1a3a8a'/><circle cx='8.5' cy='9' r='2.5' fill='#e6eeff'/></g><path d='M344,54 h7 l-3.5,4z' fill='#222'/><rect x='355' y='47' width='1' height='16' fill='#c8c8c8'/><rect x='356' y='47' width='1' height='16' fill='#f8f8f8'/><g transform='translate(362,47)'><path d='M6,7.5 L9,3.5 M6,7.5 L9,11.5' stroke='#000' stroke-width='1.2' fill='none'/><path d='M0.5,5.5 h4 v-2.5 l4,4.5 l-4,4.5 v-2.5 h-4z' fill='#4a90e8' stroke='#000' stroke-width='0.9'/><path d='M8.5,2 h3 v-2 l4,3 l-4,3 v-2 h-3z' fill='#4a90e8' stroke='#000' stroke-width='0.9'/><path d='M8.5,11 h3 v-2 l4,3 l-4,3 v-2 h-3z' fill='#4a90e8' stroke='#000' stroke-width='0.9'/></g><g transform='translate(386,48)'><rect x='0.5' y='0.5' width='13' height='13' fill='#2b6fd6' stroke='#000'/><path d='M1,13 a12,12 0 0 1 12,-12 v12z' fill='#18d0a0'/><path d='M5,13 a8,8 0 0 1 8,-8 v8z' fill='#f0e020'/><circle cx='10' cy='10' r='3' fill='#f5a000' stroke='#8a0000'/><circle cx='10' cy='10' r='1' fill='#8a0000'/></g><g transform='translate(408,47)'><path d='M0,2 q8,-3 16,2 M0,6 q8,-3 16,2 M4,14 q6,0 12,1' stroke='#222' stroke-width='1.2' fill='none'/><path d='M1,10 q3,-4 8,-1 q4,3 6,4 q-6,0 -9,-1 q-4,0 -5,-2z' fill='#5a8ae0' stroke='#1a3a8a' stroke-width='0.8'/></g><g transform='translate(431,47)'><path d='M0,2 h4 l4,1 h8 M0,6 h4 l4,1 h8' stroke='#222' stroke-width='1.2' fill='none'/><circle cx='4' cy='2' r='1.3' fill='#fff' stroke='#222'/><circle cx='11' cy='6' r='1.3' fill='#fff' stroke='#222'/><path d='M1,12 q3,-4 8,-1 q4,3 6,4 q-6,0 -9,-1 q-4,0 -5,-2z' fill='#5a8ae0' stroke='#1a3a8a' stroke-width='0.8'/></g><g transform='translate(454,47)'><path d='M0.5,4.5 l4,-4 h11 v11 l-4,4 h-11z' fill='#a8c8e8' stroke='#1a3050'/><path d='M0.5,4.5 h11 v11 M11.5,4.5 l4,-4' stroke='#1a3050' fill='none'/><rect x='1' y='5' width='10' height='10' fill='#d0e2f4'/><circle cx='6' cy='10' r='3' fill='#f4f8fc' opacity='0.8'/></g><rect x='476' y='47' width='1' height='16' fill='#c8c8c8'/><rect x='477' y='47' width='1' height='16' fill='#f8f8f8'/><text x='482' y='62' font-family='Liberation Sans' font-weight='bold' font-size='9' fill='#1a2a80' transform='rotate(-20 490 57)'>ABC</text><g transform='translate(506,47)'><path d='M2,6 l5,-3 l5,3 v6 l-5,3 l-5,-3z' fill='#6a9ae8' stroke='#1a2a60'/><path d='M7,0 v5 M11,10 h5 M3,12 l-3,3' stroke='#000' stroke-width='1'/></g><g transform='translate(529,47)'><defs><linearGradient id='lg' x1='0' y1='0' x2='0' y2='1'><stop offset='0' stop-color='#f04020'/><stop offset='0.35' stop-color='#f0e020'/><stop offset='0.7' stop-color='#20e0e0'/><stop offset='1' stop-color='#2050e0'/></linearGradient></defs><rect x='0.5' y='0.5' width='5' height='15' fill='url(#lg)' stroke='#000'/><path d='M6,1h2M6,8h2M6,15h2' stroke='#000'/><text x='10' y='6' font-size='5.5' font-family='Liberation Sans'>3</text><text x='10' y='11' font-size='5.5' font-family='Liberation Sans'>2</text><text x='10' y='16' font-size='5.5' font-family='Liberation Sans'>1</text></g><g transform='translate(552,47)'><rect x='7.5' y='0.5' width='8' height='6' fill='#c0d0f0' stroke='#1a2a60'/><rect x='0.5' y='9.5' width='6' height='6' fill='#c0d0f0' stroke='#1a2a60'/><path d='M2,2 L14,14' stroke='#000' stroke-dasharray='2,1'/></g><g transform='translate(575,47)'><path d='M0.5,4.5 h10 l-2,7 h-8z' fill='#5a88e0' stroke='#1a2a60'/><path d='M10,4.5 h5 v7 h-7' stroke='#000' stroke-dasharray='1.5,1' fill='none'/><path d='M4,15 L12,0' stroke='#000' stroke-width='1.8'/></g><g transform='translate(599,47)'><circle cx='8' cy='8' r='7.5' fill='#e0e0e0' stroke='#555'/><path d='M8,8 L8,0.5 A7.5,7.5 0 0 1 15.5,8z' fill='#f07020'/><path d='M8,8 L15.5,8 A7.5,7.5 0 0 1 8,15.5z' fill='#f0d040'/><path d='M8,8 L8,15.5 A7.5,7.5 0 0 1 0.5,8z' fill='#20b8e0'/><path d='M8,8 L0.5,8 A7.5,7.5 0 0 1 8,0.5z' fill='#40c0a0'/></g><rect x='621' y='47' width='1' height='16' fill='#c8c8c8'/><rect x='622' y='47' width='1' height='16' fill='#f8f8f8'/><text x='628' y='61' font-family='Liberation Serif' font-style='italic' font-weight='bold' font-size='15' fill='#000'>x</text><g transform='translate(650,47)'><rect x='0.5' y='0.5' width='15' height='15' fill='#fff' stroke='#222'/><path d='M2,9 l2,3 l3,-10 h8' stroke='#1a3a8a' fill='none'/><text x='6' y='13' font-size='9' font-family='Liberation Serif' fill='#1a3a8a'>α</text></g><g transform='translate(674,48)'><rect x='0.5' y='0.5' width='14' height='13' fill='#fff' stroke='#2050c0'/><path d='M0.5,4.5h14M0.5,8.5h14M5.5,0.5v13M10.5,0.5v13' stroke='#2050c0'/></g><g transform='translate(696,47)'><path d='M1,0 v15 h15' stroke='#000' fill='none'/><path d='M3,8 q5,-8 11,0' stroke='#d02020' fill='none' stroke-width='1.2'/><path d='M3,12 q5,-6 11,0' stroke='#20a040' fill='none' stroke-width='1.2'/></g><g transform='translate(719,47)'><rect x='0.5' y='1.5' width='14' height='14' fill='#fff' stroke='#333'/><text x='3' y='13' font-size='11' font-family='Liberation Serif' font-weight='bold'>A</text></g><g transform='translate(742,47)'><rect x='0.5' y='0.5' width='15' height='15' fill='#fff' stroke='#666'/><path d='M2,6 l6,-3 l6,3 v7 l-6,2 l-6,-2z' fill='#2a8ad0'/><path d='M8,3 l6,3 v7 l-6,2z' fill='#e02020'/><path d='M2,6 l6,3 v6 l-6,-2z' fill='#20b040'/></g><rect x='763' y='43' width='1' height='23' fill='#c4c4c4'/><rect x='764' y='43' width='1' height='23' fill='#ffffff'/><rect x='768' y='46' width='2' height='2' fill='#b4b4b4'/><rect x='768' y='46' width='1' height='1' fill='#8c8c8c'/><rect x='768' y='50' width='2' height='2' fill='#b4b4b4'/><rect x='768' y='50' width='1' height='1' fill='#8c8c8c'/><rect x='768' y='54' width='2' height='2' fill='#b4b4b4'/><rect x='768' y='54' width='1' height='1' fill='#8c8c8c'/><rect x='768' y='58' width='2' height='2' fill='#b4b4b4'/><rect x='768' y='58' width='1' height='1' fill='#8c8c8c'/><rect x='768' y='62' width='2' height='2' fill='#b4b4b4'/><rect x='768' y='62' width='1' height='1' fill='#8c8c8c'/><g transform='translate(777,47)'><circle cx='8' cy='8' r='7' fill='#f8f4e0' stroke='#000' stroke-width='1.6'/><path d='M8,3.5 V8 H11.5' stroke='#000' stroke-width='1.6' fill='none'/></g><g transform='translate(800,48)'><rect x='0' y='0.5' width='16' height='13' fill='#000'/><rect x='2' y='3' width='5' height='8' fill='#e8e8d8'/><rect x='9' y='3' width='5' height='8' fill='#e8e8d8'/><path d='M1,1.5 h14 M1,12.5 h14' stroke='#fff' stroke-dasharray='1,1.5'/></g><g transform='translate(823,47)'><rect x='0.5' y='4.5' width='8' height='10' fill='#fff' stroke='#888'/><path d='M3,11 l9,-10 l2,2 l-9,10z' fill='#f0d020' stroke='#555' stroke-width='0.8'/><path d='M9,8h6M9,11h6M7,14h8' stroke='#000'/></g><g transform='translate(847,47)'><path d='M1,15 l9,-9' stroke='#666' stroke-width='2.5'/><path d='M1.5,14.5 l9,-9' stroke='#fff' stroke-width='1'/><path d='M9,3 l4,4 l2,-2 q1,-4 -2,-4z' fill='#000'/></g><g transform='translate(869,47)'><rect x='4.5' y='0.5' width='11' height='15' fill='#e8dcb0' stroke='#6a5a3a'/><g fill='#b09040'><rect x='6' y='5' width='2' height='2'/><rect x='9' y='5' width='2' height='2'/><rect x='12' y='5' width='2' height='2'/><rect x='6' y='9' width='2' height='2'/><rect x='9' y='9' width='2' height='2'/><rect x='12' y='9' width='2' height='2'/><rect x='6' y='12' width='2' height='2'/><rect x='9' y='12' width='2' height='2'/><rect x='12' y='12' width='2' height='2'/></g><text x='0' y='14' font-size='13' font-family='Liberation Serif' font-style='italic' font-weight='bold'>f</text></g><g transform='translate(892,47)'><rect x='4.5' y='0.5' width='11' height='15' fill='#e8dcb0' stroke='#6a5a3a'/><g fill='#b09040'><rect x='6' y='5' width='2' height='2'/><rect x='9' y='5' width='2' height='2'/><rect x='12' y='5' width='2' height='2'/><rect x='6' y='9' width='2' height='2'/><rect x='9' y='9' width='2' height='2'/><rect x='12' y='9' width='2' height='2'/><rect x='6' y='12' width='2' height='2'/><rect x='9' y='12' width='2' height='2'/><rect x='12' y='12' width='2' height='2'/></g><text x='-1' y='13' font-size='11' font-family='Liberation Sans' font-weight='bold' fill='#8a1a1a'>M</text></g><g transform='translate(915,47)'><rect x='4.5' y='0.5' width='11' height='15' fill='#e8dcb0' stroke='#6a5a3a'/><g fill='#b09040'><rect x='6' y='5' width='2' height='2'/><rect x='9' y='5' width='2' height='2'/><rect x='12' y='5' width='2' height='2'/><rect x='6' y='9' width='2' height='2'/><rect x='9' y='9' width='2' height='2'/><rect x='12' y='9' width='2' height='2'/><rect x='6' y='12' width='2' height='2'/><rect x='9' y='12' width='2' height='2'/><rect x='12' y='12' width='2' height='2'/></g><rect x='0.5' y='3.5' width='8' height='8' fill='#2a5ad0' stroke='#1a2a80'/><path d='M1,4l7,7M8,4l-7,7M4.5,3.5v8M0.5,7.5h8' stroke='#fff' stroke-width='0.8'/></g><g transform='translate(938,47)'><text x='1' y='6' font-size='7' font-family='Liberation Sans'>1</text><text x='9' y='6' font-size='7' font-family='Liberation Sans'>2</text><path d='M8,0 v16' stroke='#888'/><circle cx='4' cy='12' r='3.5' fill='#2a6ad0' stroke='#000'/><circle cx='12' cy='12' r='3.5' fill='#2a6ad0' stroke='#000'/></g><g transform='translate(961,47)'><rect x='0.5' y='0.5' width='15' height='15' fill='#fff' stroke='#000' stroke-width='1.2'/><path d='M3,4 l4,3.5 l-4,3.5' stroke='#000' stroke-width='1.6' fill='none'/><path d='M8,12h4' stroke='#2050e0' stroke-width='1.5'/></g><rect x='385' y='76' width='2' height='2' fill='#b4b4b4'/><rect x='385' y='76' width='1' height='1' fill='#8c8c8c'/><rect x='385' y='80' width='2' height='2' fill='#b4b4b4'/><rect x='385' y='80' width='1' height='1' fill='#8c8c8c'/><rect x='385' y='84' width='2' height='2' fill='#b4b4b4'/><rect x='385' y='84' width='1' height='1' fill='#8c8c8c'/><rect x='385' y='88' width='2' height='2' fill='#b4b4b4'/><rect x='385' y='88' width='1' height='1' fill='#8c8c8c'/><rect x='385' y='92' width='2' height='2' fill='#b4b4b4'/><rect x='385' y='92' width='1' height='1' fill='#8c8c8c'/><g transform='translate(394,76)'><path d='M4,1 v8 M0.5,5 h7 M1.5,2 l5,6 M6.5,2 l-5,6' stroke='#000' stroke-width='1.3'/><path d='M6.5,3.5 v12 l3,-3 l2,4 l2,-1 l-2,-4 h4z' fill='#fff' stroke='#000'/></g><rect x='415' y='72' width='1' height='26' fill='#c8c8c8'/><rect x='416' y='72' width='1' height='26' fill='#ffffff'/><rect x='420' y='76' width='2' height='2' fill='#b4b4b4'/><rect x='420' y='76' width='1' height='1' fill='#8c8c8c'/><rect x='420' y='80' width='2' height='2' fill='#b4b4b4'/><rect x='420' y='80' width='1' height='1' fill='#8c8c8c'/><rect x='420' y='84' width='2' height='2' fill='#b4b4b4'/><rect x='420' y='84' width='1' height='1' fill='#8c8c8c'/><rect x='420' y='88' width='2' height='2' fill='#b4b4b4'/><rect x='420' y='88' width='1' height='1' fill='#8c8c8c'/><rect x='420' y='92' width='2' height='2' fill='#b4b4b4'/><rect x='420' y='92' width='1' height='1' fill='#8c8c8c'/><rect x='426.5' y='76.5' width='22' height='19' rx='3' fill='#e6e6e6' stroke='#6e6e6e'/><g transform='translate(429,78)'><path d='M3,7 a5.5,5.5 0 0 1 10,-1' stroke='#000' stroke-width='2' fill='none'/><path d='M13,9 a5.5,5.5 0 0 1 -10,1' stroke='#000' stroke-width='2' fill='none'/><path d='M0,6 l3,4 l3,-4z' fill='#000' transform='translate(0,-3)'/><path d='M10,10 l3,-4 l3,4z' fill='#000' transform='translate(0,3)'/></g><g transform='translate(453,77)'><path d='M8,0 v16 M0,8 h16' stroke='#000' stroke-width='1.2'/><path d='M8,0 l-2.5,3 h5z M8,16 l-2.5,-3 h5z M0,8 l3,-2.5 v5z M16,8 l-3,-2.5 v5z' fill='#000'/></g><g transform='translate(475,77)'><circle cx='6.5' cy='6.5' r='5.5' fill='#fff' stroke='#000' stroke-width='1.4'/><path d='M10.5,10.5 l5,5' stroke='#000' stroke-width='2.4'/><path d='M6.5,2.5 l-2,2.5 h4z M6.5,10.5 l-2,-2.5 h4z' fill='#000'/></g><g transform='translate(498,77)'><circle cx='6.5' cy='6.5' r='5.5' fill='#fff' stroke='#000' stroke-width='1.4'/><path d='M10.5,10.5 l5,5' stroke='#000' stroke-width='2.4'/><path d='M3.5,6.5h6M6.5,3.5v6' stroke='#000' stroke-width='1.2'/></g><g transform='translate(521,77)'><circle cx='6.5' cy='6.5' r='5.5' fill='#fff' stroke='#000' stroke-width='1.4'/><path d='M10.5,10.5 l5,5' stroke='#000' stroke-width='2.4'/><path d='M4,5 l2.5,-1.5 l2.5,1.5 v3 l-2.5,1.5 l-2.5,-1.5z' fill='#3a7ae0' stroke='#1a2a60' stroke-width='0.6'/></g><rect x='543' y='79' width='1' height='16' fill='#c8c8c8'/><rect x='544' y='79' width='1' height='16' fill='#ffffff'/><g transform='translate(550,77)'><rect x='1' y='1' width='15' height='15' fill='none' stroke='#1a9a2a' stroke-width='2' stroke-dasharray='2,1.5'/><rect x='6.5' y='4.5' width='6' height='6' fill='#fff' stroke='#000'/><rect x='4.5' y='6.5' width='6' height='6' fill='#fff' stroke='#000'/></g><rect x='572' y='79' width='1' height='16' fill='#c8c8c8'/><rect x='573' y='79' width='1' height='16' fill='#ffffff'/><rect x='591.5' y='78.5' width='12' height='12' fill='#d8e2f4' stroke='#000'/><path d='M610,84 h7 l-3.5,4z' fill='#222'/><rect x='625' y='72' width='1' height='26' fill='#c8c8c8'/><rect x='626' y='72' width='1' height='26' fill='#ffffff'/><rect x='630' y='76' width='2' height='2' fill='#b4b4b4'/><rect x='630' y='76' width='1' height='1' fill='#8c8c8c'/><rect x='630' y='80' width='2' height='2' fill='#b4b4b4'/><rect x='630' y='80' width='1' height='1' fill='#8c8c8c'/><rect x='630' y='84' width='2' height='2' fill='#b4b4b4'/><rect x='630' y='84' width='1' height='1' fill='#8c8c8c'/><rect x='630' y='88' width='2' height='2' fill='#b4b4b4'/><rect x='630' y='88' width='1' height='1' fill='#8c8c8c'/><rect x='630' y='92' width='2' height='2' fill='#b4b4b4'/><rect x='630' y='92' width='1' height='1' fill='#8c8c8c'/><g transform='translate(639,77)'><text x='0' y='10' font-size='11' font-family='Liberation Sans' font-weight='bold'>?</text><rect x='6.5' y='6.5' width='9' height='9' fill='#fff' stroke='#000'/><path d='M6.5,8.5h9M8,11h6M8,13h6' stroke='#000' stroke-width='0.8'/></g><path d='M441,106 h7 l-3.5,4z' fill='#333'/><defs><linearGradient id='cbg' x1='0' y1='0' x2='1' y2='1'><stop offset='0' stop-color='#d8d8d8'/><stop offset='1' stop-color='#fafafa'/></linearGradient></defs><g transform='translate(93,98)'><rect x='0.5' y='0.5' width='12' height='12' fill='#f4f4f4' stroke='#8f8f8f'/><rect x='2' y='2' width='9' height='9' fill='url(#cbg)'/></g><g transform='translate(110,97)'><path d='M1,3 l2,-2 h3 v12 l-2,2 h-3z' fill='#4a86e8' stroke='#0a1a40' stroke-width='0.9'/><path d='M8,3 h6 M8,11 h6' stroke='#6a0a0a' stroke-width='1.3'/><path d='M8,3 l3,-2.5 v5z M8,11 l3,-2.5 v5z' fill='#6a0a0a'/></g><g transform='translate(93,116)'><rect x='0.5' y='0.5' width='12' height='12' fill='#f4f4f4' stroke='#8f8f8f'/><rect x='2' y='2' width='9' height='9' fill='url(#cbg)'/></g><g transform='translate(110,115)'><path d='M1,3 l2,-2 h3 v12 l-2,2 h-3z' fill='#4a86e8' stroke='#0a1a40' stroke-width='0.9'/><path d='M8,3 h6 M8,11 h6' stroke='#6a0a0a' stroke-width='1.3'/><path d='M8,3 l3,-2.5 v5z M8,11 l3,-2.5 v5z' fill='#6a0a0a'/></g><g transform='translate(93,134)'><rect x='0.5' y='0.5' width='12' height='12' fill='#f4f4f4' stroke='#8f8f8f'/><rect x='2' y='2' width='9' height='9' fill='url(#cbg)'/></g><g transform='translate(110,133)'><path d='M1,3 l2,-2 h3 v12 l-2,2 h-3z' fill='#4a86e8' stroke='#0a1a40' stroke-width='0.9'/><path d='M8,3 h6 M8,11 h6' stroke='#6a0a0a' stroke-width='1.3'/><path d='M8,3 l3,-2.5 v5z M8,11 l3,-2.5 v5z' fill='#6a0a0a'/></g><path d='M55.5,154.5 l4,4 l-4,4z' fill='#fff' stroke='#a0a0a0'/><g transform='translate(69,150)'><path d='M0.5,2.5 h5 l1,1 h7 v11 h-13z' fill='#f8e7a0' stroke='#8a7020'/><path d='M4,7 l3,-2 l3,2 v4 l-3,2 l-3,-2z' fill='#6a9ae8' stroke='#1a2a60' stroke-width='0.8'/></g><path d='M20,173.5 v5.5 h-5.5z' fill='#404040'/><g transform='translate(29,168)'><path d='M0.5,2.5 h5 l1,1 h7 v11 h-13z' fill='#f8e7a0' stroke='#8a7020'/><path d='M3,6 l4,-2 l4,2 v4 l-4,2 l-4,-2z' fill='#20a0e0' stroke='#000' stroke-width='0.8'/><path d='M7,8 l4,-2 v4 l-4,2z' fill='#f02020'/><path d='M3,6 l4,2 v4 l-4,-2z' fill='#20c040'/></g><g transform='translate(53,188)'><rect x='0.5' y='0.5' width='12' height='12' fill='#f4f4f4' stroke='#8f8f8f'/><rect x='2' y='2' width='9' height='9' fill='url(#cbg)'/><path d='M3,6 l2.5,3 l5,-6' stroke='#3a5a9a' stroke-width='1.6' fill='none'/></g><g transform='translate(71,187)'><rect x='0.5' y='0.5' width='13' height='13' fill='#2b6fd6' stroke='#000'/><path d='M1,13 a12,12 0 0 1 12,-12 v12z' fill='#18d0c0'/><path d='M5,13 a8,8 0 0 1 8,-8 v8z' fill='#f0e020'/><circle cx='10' cy='10' r='3' fill='#f5a000' stroke='#8a0000'/><circle cx='10' cy='10' r='1' fill='#8a0000'/></g><g transform='translate(49,204)'><rect x='7.5' y='0.5' width='8' height='6' fill='#c0d0f0' stroke='#1a2a60'/><rect x='0.5' y='9.5' width='6' height='6' fill='#c0d0f0' stroke='#1a2a60'/><path d='M2,2 L14,14' stroke='#000' stroke-dasharray='2,1'/></g><g transform='translate(53,224)'><rect x='0.5' y='0.5' width='12' height='12' fill='#f4f4f4' stroke='#8f8f8f'/><rect x='2' y='2' width='9' height='9' fill='url(#cbg)'/><path d='M3,6 l2.5,3 l5,-6' stroke='#3a5a9a' stroke-width='1.6' fill='none'/></g><g transform='translate(71,222)'><defs><linearGradient id='lg2' x1='0' y1='0' x2='0' y2='1'><stop offset='0' stop-color='#f06040'/><stop offset='0.4' stop-color='#f0f0a0'/><stop offset='0.7' stop-color='#40e0e0'/><stop offset='1' stop-color='#2060e0'/></linearGradient></defs><rect x='0.5' y='0.5' width='5' height='15' fill='url(#lg2)' stroke='#000'/><path d='M6,1h2M6,8h2M6,15h2' stroke='#000'/><text x='10' y='6' font-size='5.5' font-family='Liberation Sans'>3</text><text x='10' y='11' font-size='5.5' font-family='Liberation Sans'>2</text><text x='10' y='16' font-size='5.5' font-family='Liberation Sans'>1</text></g><g transform='translate(53,242)'><rect x='0.5' y='0.5' width='12' height='12' fill='#f4f4f4' stroke='#8f8f8f'/><rect x='2' y='2' width='9' height='9' fill='url(#cbg)'/><path d='M3,6 l2.5,3 l5,-6' stroke='#3a5a9a' stroke-width='1.6' fill='none'/></g><g transform='translate(71,242)'><path d='M0.5,4.5 h10 v10 h-10z M4.5,0.5 h10 v10 h-10z M0.5,4.5 l4,-4 M10.5,4.5 l4,-4 M0.5,14.5 l4,-4 M10.5,14.5 l4,-4' stroke='#1a6ac0' fill='none' stroke-width='0.9'/></g><path d='M20,263.5 v5.5 h-5.5z' fill='#404040'/><g transform='translate(29,258)'><path d='M0.5,2.5 h5 l1,1 h7 v11 h-13z' fill='#f8e7a0' stroke='#8a7020'/><rect x='3.5' y='5.5' width='8' height='8' fill='#4a7ad8' stroke='#1a2a60'/><path d='M5,8h5M5,10h5' stroke='#c0d0f0'/></g><defs><radialGradient id='orb' cx='0.5' cy='0.35' r='0.6'><stop offset='0' stop-color='#9fd4f4'/><stop offset='0.5' stop-color='#2a7ac0'/><stop offset='1' stop-color='#0a3a78'/></radialGradient><linearGradient id='ie' x1='0' y1='0' x2='0' y2='1'><stop offset='0' stop-color='#8ae0ff'/><stop offset='0.5' stop-color='#3ab0f0'/><stop offset='1' stop-color='#1a70d0'/></linearGradient><linearGradient id='btn' x1='0' y1='0' x2='0' y2='1'><stop offset='0' stop-color='#6e7680'/><stop offset='0.5' stop-color='#4a525c'/><stop offset='1' stop-color='#3a424c'/></linearGradient><linearGradient id='btn2' x1='0' y1='0' x2='0' y2='1'><stop offset='0' stop-color='#c8ccd2'/><stop offset='0.5' stop-color='#9aa0a8'/><stop offset='1' stop-color='#80868e'/></linearGradient></defs><circle cx='26.5' cy='747.5' r='18' fill='url(#orb)' stroke='#0a2a50'/><path d='M18,740 q4,-3 8,0 v6 q-4,-3 -8,0z' fill='#f05a20'/><path d='M27,740 q4,2 8,-1 v6 q-4,3 -8,1z' fill='#7ac040'/><path d='M18,747 q4,-3 8,0 v6 q-4,-3 -8,0z' fill='#2a9ae8'/><path d='M27,747 q4,2 8,-1 v6 q-4,3 -8,1z' fill='#f8c020'/><path d='M73,738 h10 l2,2 h20 v22 h-32z' fill='#f4dc88' stroke='#b89040'/><rect x='76' y='737' width='26' height='5' fill='#fff'/><rect x='78' y='737' width='3' height='2' fill='#20b020'/><rect x='88' y='738' width='3' height='2' fill='#c02020'/><rect x='96' y='739' width='3' height='2' fill='#2080e0'/><path d='M73,743 h32 v19 h-32z' fill='#f8e4a0' stroke='#b89040'/><path d='M77,753 h20 v9 h-3 v-5 h-14 v5 h-3z' fill='#7ab4e8' stroke='#2a6ab0'/><rect x='140' y='737' width='22' height='24' fill='#b4d4f0' stroke='#6a9ac8'/><rect x='137' y='736' width='22' height='25' fill='#8ab8e4' stroke='#5a8ac0'/><circle cx='148' cy='748.5' r='8' fill='#f08020'/><path d='M145,743 l8,5.5 l-8,5.5z' fill='#fff'/><path d='M210,733 v29' stroke='#c8d040' stroke-width='1.5'/><path d='M198,748 h9 M204,745 l3,3 l-3,3' stroke='#8ac040' stroke-width='1.6' fill='none'/><g transform='translate(218,749)'><path d='M-7.5,1 H7.5 A7.8,8.5 0 1 0 5.5,7' fill='none' stroke='#b8d040' stroke-width='3.6'/></g><g transform='translate(275,747)'><path d='M-10.5,2 H10.5 A11,11 0 1 0 7,8.5' fill='none' stroke='url(#ie)' stroke-width='6.5'/><path d='M-10.5,-1 H10' stroke='#1a80d8' stroke-width='0'/><path d='M-7,-1.5 q7,-9 14,0z' fill='#2a9ae8'/><ellipse cx='0' cy='0' rx='17' ry='8' transform='rotate(-38)' fill='none' stroke='#f0c030' stroke-width='2.4'/></g><circle cx='337' cy='748' r='14.5' fill='#3aa040'/><path d='M337,748 L324.4,740.75 A14.5,14.5 0 0 1 349.6,740.75z' fill='#e03020'/><path d='M337,748 L349.6,740.75 A14.5,14.5 0 0 1 337,762.5z' fill='#f8c820'/><circle cx='337' cy='748' r='6.5' fill='#fff'/><circle cx='337' cy='748' r='5' fill='#3a78d8'/><rect x='370.5' y='729.5' width='57' height='37' rx='2' fill='url(#btn)' stroke='#8a9098'/><rect x='384' y='732' width='30' height='31' rx='6' fill='#f8c818'/><path d='M386,762 L396,734 h6 L412,762 h-6 L399,742 L392,762z' fill='#1a1a1a'/><rect x='432.5' y='729.5' width='57' height='37' rx='2' fill='url(#btn2)' stroke='#d0d4da'/><circle cx='461' cy='748' r='16' fill='#5a88e0' stroke='#3a60b0'/><path d='M449,748 q12,-12 24,0 q-12,12 -24,0z' fill='none' stroke='#fff' stroke-width='2'/><circle cx='461' cy='748' r='3.5' fill='#fff'/><path d='M1131,751 l4,-4 l4,4z' fill='#fff'/><rect x='1152' y='741' width='16' height='16' fill='#e8902a'/><text x='1154' y='755' font-size='12' font-weight='bold' font-family='Liberation Sans' fill='#2a8a2a'>T</text><circle cx='1163' cy='751' r='3' fill='#4a7ad8'/><path d='M1177,744 l4,-3 l4,3 l4,-3 l4,3 l-4,3 l4,3 l-4,3 l-4,-3 l-4,3 l-4,-3 l4,-3z' fill='#3a90e0'/><circle cx='1188' cy='754' r='4' fill='#20a040'/><path d='M1186,754 l1.5,1.5 l3,-3' stroke='#fff' stroke-width='1' fill='none'/><path d='M1201,740 v17' stroke='#fff' stroke-width='1.4'/><path d='M1202,741 h7 l1,2 h4 v6 h-7 l-1,-2 h-4z' fill='#fff'/><circle cx='1211' cy='753' r='4.5' fill='#e02020' stroke='#fff'/><path d='M1209,751 l4,4 M1213,751 l-4,4' stroke='#fff' stroke-width='1.2'/><g fill='#fff'><rect x='1225' y='754' width='2' height='2'/><rect x='1228' y='752' width='2' height='4'/><rect x='1231' y='749' width='2' height='7'/><rect x='1234' y='746' width='2' height='10'/><rect x='1237' y='743' width='2' height='13' fill='#888'/></g><path d='M1249,745 h3 l4,-4 v15 l-4,-4 h-3z' fill='#fff'/><path d='M1258,745 q2,3 0,6 M1261,743 q3,5 0,10' stroke='#fff' stroke-width='1.2' fill='none'/><rect x='1352.5' y='729.5' width='13' height='38' fill='#3a424c' stroke='#6a727c' opacity='0.8'/><path d='M1293,623 V592' stroke='#20a040' stroke-width='2.2'/><path d='M1289.5,596 L1293,584 L1296.5,596z' fill='#20a040'/><path d='M1293,622.5 H1271' stroke='#f02020' stroke-width='2.4'/><path d='M1273,619 L1264,623 L1273,627z' fill='#f02020'/><path d='M1272,621 h8' stroke='#1a30c0' stroke-width='2.5'/><circle cx='1266' cy='603' r='3.8' fill='#20c8d8'/><circle cx='1265' cy='602' r='1.5' fill='#90f0f0'/></svg>
<div class='t' style='left:21px;top:0.84px;font-size:12px;line-height:12px;font-weight:400;color:#000;transform:scaleX(0.9974);'>A6 : Fluid Flow - Blow Molding (Polyflow) - CFD-Post</div>
<div class='t' style='left:7px;top:26.69px;font-size:11px;line-height:11px;font-weight:400;color:#000;transform:scaleX(0.9248);'>File</div>
<div class='t' style='left:39px;top:26.69px;font-size:11px;line-height:11px;font-weight:400;color:#000;transform:scaleX(0.9806);'>Edit</div>
<div class='t' style='left:73px;top:26.69px;font-size:11px;line-height:11px;font-weight:400;color:#000;transform:scaleX(0.9198);'>Session</div>
<div class='t' style='left:125.5px;top:26.69px;font-size:11px;line-height:11px;font-weight:400;color:#000;transform:scaleX(1.0539);'>Insert</div>
<div class='t' style='left:170px;top:26.69px;font-size:11px;line-height:11px;font-weight:400;color:#000;transform:scaleX(0.9343);'>Tools</div>
<div class='t' style='left:210px;top:26.69px;font-size:11px;line-height:11px;font-weight:400;color:#000;transform:scaleX(0.9282);'>Help</div>
<div class='t' style='left:293.5px;top:49.69px;font-size:11px;line-height:11px;font-weight:400;color:#000;transform:scaleX(0.9617);'>Location</div>
<div class='t' style='left:14.6px;top:76.69px;font-size:11px;line-height:11px;font-weight:400;color:#000;transform:scaleX(0.9467);'>Outline</div>
<div class='t' style='left:71.7px;top:77.69px;font-size:11px;line-height:11px;font-weight:400;color:#000;transform:scaleX(0.9102);'>Variables</div>
<div class='t' style='left:136px;top:77.69px;font-size:11px;line-height:11px;font-weight:400;color:#000;transform:scaleX(0.9512);'>Expressions</div>
<div class='t' style='left:216.7px;top:77.69px;font-size:11px;line-height:11px;font-weight:400;color:#000;transform:scaleX(0.9449);'>Calculators</div>
<div class='t' style='left:292px;top:77.69px;font-size:11px;line-height:11px;font-weight:400;color:#000;transform:scaleX(0.9390);'>Turbo</div>
<div class='t' style='left:131.3px;top:98.69px;font-size:11px;line-height:11px;font-weight:400;color:#000;transform:scaleX(0.8883);'>SURFACE_BODY_RFACE_BODY_3</div>
<div class='t' style='left:131.3px;top:116.69px;font-size:11px;line-height:11px;font-weight:400;color:#000;transform:scaleX(0.9120);'>SURFACE_BODY_surf</div>
<div class='t' style='left:131.3px;top:134.69px;font-size:11px;line-height:11px;font-weight:400;color:#000;transform:scaleX(0.9157);'>SURFACE_BODY_surf_back</div>
<div class='t' style='left:91.2px;top:152.69px;font-size:11px;line-height:11px;font-weight:700;color:#000;transform:scaleX(1.0405);'>Mesh Regions</div>
<div class='t' style='left:50.9px;top:170.69px;font-size:11px;line-height:11px;font-weight:700;color:#000;transform:scaleX(1.0429);'>User Locations and Plots</div>
<div class='t' style='left:91.2px;top:188.69px;font-size:11px;line-height:11px;font-weight:400;color:#000;transform:scaleX(1.0018);'>Contour 1</div>
<div class='t' style='left:70.2px;top:206.69px;font-size:11px;line-height:11px;font-weight:400;color:#000;transform:scaleX(0.9872);'>Default Transform</div>
<div class='t' style='left:91.2px;top:224.69px;font-size:11px;line-height:11px;font-weight:400;color:#000;transform:scaleX(0.9747);'>Default Legend View 4</div>
<div class='t' style='left:91.8px;top:242.69px;font-size:11px;line-height:11px;font-weight:400;color:#fff;transform:scaleX(0.9698);'>Wireframe</div>
<div class='t' style='left:50.9px;top:260.69px;font-size:11px;line-height:11px;font-weight:700;color:#000;transform:scaleX(1.0916);'>Report</div>
<div class='t' style='left:398px;top:103.69px;font-size:11px;line-height:11px;font-weight:700;color:#1a1a1a;transform:scaleX(1.1161);'>View 4</div>
<div class='t' style='left:385px;top:137.20px;font-size:13px;line-height:13px;font-weight:400;color:#000;transform:scaleX(0.9919);'>THICKNESS</div>
<div class='t' style='left:385px;top:150.44px;font-size:12px;line-height:12px;font-weight:400;color:#000;transform:scaleX(0.9867);'>Contour 1</div>
<div class='t' style='left:410.2px;top:167.60px;font-size:13px;line-height:13px;font-weight:400;color:#000;transform:scaleX(0.9851);'>4.500e-003</div>
<div class='t' style='left:410.2px;top:192.35px;font-size:13px;line-height:13px;font-weight:400;color:#000;transform:scaleX(0.9851);'>4.150e-003</div>
<div class='t' style='left:410.2px;top:217.10px;font-size:13px;line-height:13px;font-weight:400;color:#000;transform:scaleX(0.9851);'>3.800e-003</div>
<div class='t' style='left:410.2px;top:241.85px;font-size:13px;line-height:13px;font-weight:400;color:#000;transform:scaleX(0.9851);'>3.450e-003</div>
<div class='t' style='left:410.2px;top:266.60px;font-size:13px;line-height:13px;font-weight:400;color:#000;transform:scaleX(0.9851);'>3.100e-003</div>
<div class='t' style='left:410.2px;top:291.35px;font-size:13px;line-height:13px;font-weight:400;color:#000;transform:scaleX(0.9851);'>2.750e-003</div>
<div class='t' style='left:410.2px;top:316.10px;font-size:13px;line-height:13px;font-weight:400;color:#000;transform:scaleX(0.9851);'>2.400e-003</div>
<div class='t' style='left:410.2px;top:340.85px;font-size:13px;line-height:13px;font-weight:400;color:#000;transform:scaleX(0.9851);'>2.050e-003</div>
<div class='t' style='left:410.2px;top:365.60px;font-size:13px;line-height:13px;font-weight:400;color:#000;transform:scaleX(0.9851);'>1.700e-003</div>
<div class='t' style='left:410.2px;top:390.35px;font-size:13px;line-height:13px;font-weight:400;color:#000;transform:scaleX(0.9851);'>1.350e-003</div>
<div class='t' style='left:410.2px;top:415.10px;font-size:13px;line-height:13px;font-weight:400;color:#000;transform:scaleX(0.9851);'>1.000e-003</div>
<div class='t' style='left:384.5px;top:432.00px;font-size:13px;line-height:13px;font-weight:400;color:#000;'>[m]</div>
<div class='t' style='left:1276px;top:124.91px;font-size:23.5px;line-height:23.5px;font-weight:700;color:#000;transform:scaleX(0.8151);'>ANSYS</div>
<div class='t' style='left:1313.6px;top:148.38px;font-size:11.6px;line-height:11.6px;font-weight:400;color:#000;transform:scaleX(0.9309);'>R14.5</div>
<div class='t' style='left:751px;top:613.00px;font-size:13px;line-height:13px;font-weight:400;color:#000;'>0</div>
<div class='t' style='left:853px;top:613.00px;font-size:13px;line-height:13px;font-weight:400;color:#111;'>0.100</div>
<div class='t' style='left:957px;top:613.00px;font-size:13px;line-height:13px;font-weight:400;color:#000;'>0.200</div>
<div class='t' style='left:996px;top:613.00px;font-size:13px;line-height:13px;font-weight:400;color:#000;'>(m)</div>
<div class='t' style='left:796px;top:643.00px;font-size:13px;line-height:13px;font-weight:400;color:#000;'>0.050</div>
<div class='t' style='left:912px;top:643.00px;font-size:13px;line-height:13px;font-weight:400;color:#000;'>0.150</div>
<div class='t' style='left:1294.5px;top:565.69px;font-size:11px;line-height:11px;font-weight:400;color:#1aa040;transform:scaleX(1.0213);'>Y</div>
<div class='t' style='left:1257.5px;top:613.69px;font-size:11px;line-height:11px;font-weight:400;color:#ff2020;transform:scaleX(1.0213);'>X</div>
<div class='t' style='left:1265px;top:609.19px;font-size:11px;line-height:11px;font-weight:400;color:#2040ff;transform:scaleX(1.0394);'>Z</div>
<div class='t' style='left:391px;top:681.69px;font-size:11px;line-height:11px;font-weight:400;color:#000;transform:scaleX(0.9298);'>3D Viewer</div>
<div class='t' style='left:461px;top:682.69px;font-size:11px;line-height:11px;font-weight:400;color:#000;transform:scaleX(0.9525);'>Table Viewer</div>
<div class='t' style='left:544.4px;top:682.69px;font-size:11px;line-height:11px;font-weight:400;color:#000;transform:scaleX(0.9670);'>Chart Viewer</div>
<div class='t' style='left:629.3px;top:682.69px;font-size:11px;line-height:11px;font-weight:400;color:#000;transform:scaleX(0.9397);'>Comment Viewer</div>
<div class='t' style='left:732px;top:682.69px;font-size:11px;line-height:11px;font-weight:400;color:#000;transform:scaleX(0.9784);'>Report Viewer</div>
<div class='t' style='left:1101.4px;top:739.84px;font-size:12px;line-height:12px;font-weight:400;color:#fff;transform:scaleX(0.8117);'>ES</div>
<div class='t' style='left:1283.5px;top:735.34px;font-size:12px;line-height:12px;font-weight:400;color:#fff;transform:scaleX(0.9611);'>06:10 p.m.</div>
<div class='t' style='left:1281.4px;top:751.84px;font-size:12px;line-height:12px;font-weight:400;color:#fff;transform:scaleX(0.9690);'>03/10/2014</div>
</body></html>
